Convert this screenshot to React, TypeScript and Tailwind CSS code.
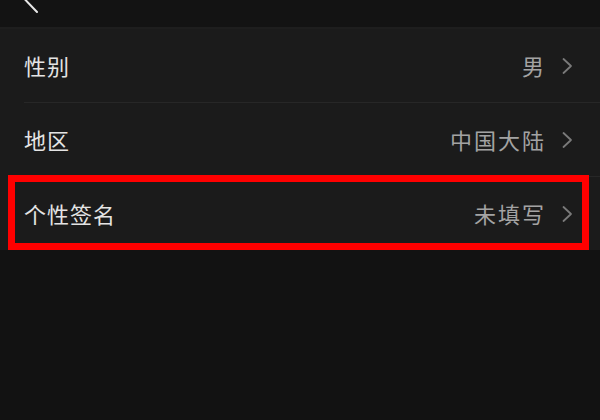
import React from 'react';

const rows = [
  { label: '性别', value: '男' },
  { label: '地区', value: '中国大陆' },
  { label: '个性签名', value: '未填写', highlight: true },
];

const Chevron = () => (
  <svg width="12" height="18" viewBox="0 0 12 18" className="shrink-0">
    <path d="M2.5 2 L10 9 L2.5 16" fill="none" stroke="#7a7a7a" strokeWidth="1.8" strokeLinecap="round" strokeLinejoin="round" />
  </svg>
);

const App = () => {
  return (
    <div
      className="w-[600px] h-[420px] bg-[#121212] overflow-hidden flex flex-col"
      style={{ fontFamily: '"Noto Sans CJK SC", "Noto Sans", sans-serif' }}
    >
      {/* top bar, mostly cut off */}
      <div className="relative h-[29px] bg-[#131313] border-b-2 border-[#1e1e1e] shrink-0">
        <svg width="40" height="29" viewBox="0 0 40 29" className="absolute left-0 top-0">
          <path d="M14 -12 L37 12" fill="none" stroke="#e8e8e8" strokeWidth="2" strokeLinecap="round" />
        </svg>
      </div>

      {/* settings list */}
      <div className="bg-[#1b1b1b] flex flex-col">
        {rows.map((row, i) => (
          <div key={row.label} className="relative">
            <div className="h-[73px] flex items-center justify-between pl-[24px] pr-[27px]">
              <span className="text-[22px] text-[#e4e4e4] tracking-[1px]">{row.label}</span>
              <div className="flex items-center gap-[15px]">
                <span className="text-[22px] text-[#a3a3a3] tracking-[2px]">{row.value}</span>
                <Chevron />
              </div>
            </div>
            {i < rows.length - 1 && <div className="ml-[24px] h-px bg-[#272727]" />}
            {row.highlight && (
              <div className="absolute left-[8px] top-[-2px] w-[581px] h-[75px] border-[7px] border-[#ff0000]" />
            )}
          </div>
        ))}
      </div>
    </div>
  );
};

export default App;
